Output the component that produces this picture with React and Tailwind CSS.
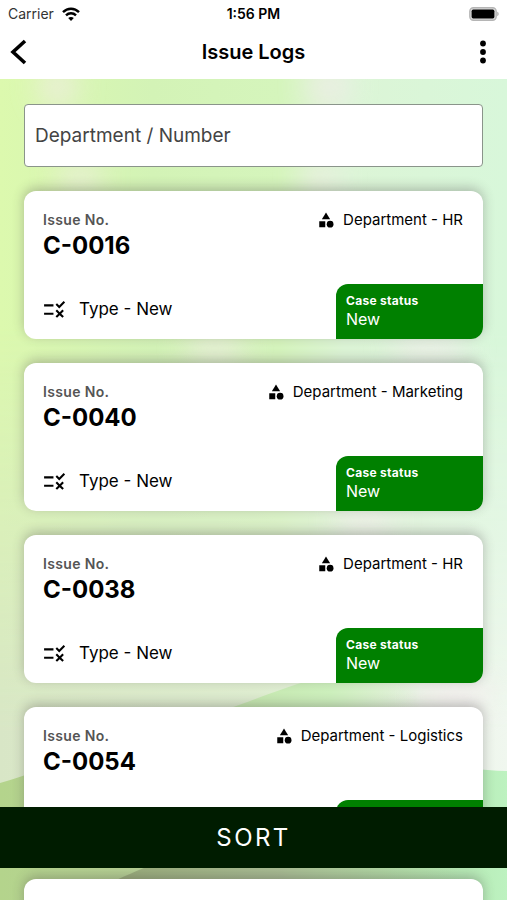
import { useState } from "react";
import { MdCategory, MdRule } from "react-icons/md";

const issues = [
    { number: "C-0016", department: "HR", type: "New", status: "New" },
    { number: "C-0040", department: "Marketing", type: "New", status: "New" },
    { number: "C-0038", department: "HR", type: "New", status: "New" },
    { number: "C-0054", department: "Logistics", type: "New", status: "New" },
    { number: "C-0061", department: "Finance", type: "New", status: "New" },
];

const StatusBar = () => (
    <div className="grid grid-cols-3 items-center h-7 px-2 text-sm">
        <div className="flex items-center gap-2 text-[#333]">
            <span>Carrier</span>
            <svg width="18" height="14" viewBox="0 0 18 14" fill="none" stroke="#000" strokeWidth="2.4">
                <path d="M1 5.2C5.5 .6 12.5 .6 17 5.2" />
                <path d="M4 8.4c2.800-2.800 7.200-2.800 10 0" />
                <path d="M9 14L6.200 11c1.600-1.500 4-1.500 5.600 0z" fill="#000" stroke="none" />
            </svg>
        </div>
        <span className="text-center font-semibold">1:56 PM</span>
        <svg className="justify-self-end" width="30" height="14" viewBox="0 0 30 14">
            <rect x=".8" y=".8" width="26.4" height="12.4" rx="3.6" fill="#ddd" stroke="#b5b5b5" strokeWidth="1.4" />
            <rect x="2.6" y="2.6" width="22.800" height="8.8" rx="1.6" fill="#000" />
            <path d="M28.2 4.8c2 .6 2 3.800 0 4.400z" fill="#b5b5b5" />
        </svg>
    </div>
);

const Header = () => (
    <div className="flex items-center justify-between h-12 px-2">
        <button type="button" aria-label="Back" className="w-8 h-12 flex items-center">
            <svg width="22" height="28" viewBox="0 0 22 28" fill="none" stroke="#000" strokeWidth="3.6">
                <path d="M17 3L5 14l12 11" />
            </svg>
        </button>
        <h1 className="text-xl font-semibold">Issue Logs</h1>
        <button type="button" aria-label="More options" className="w-8 h-12 flex items-center justify-center">
            <svg width="8" height="24" viewBox="0 0 8 24">
                <circle cx="4" cy="3.5" r="2.9" />
                <circle cx="4" cy="12" r="2.9" />
                <circle cx="4" cy="20.5" r="2.9" />
            </svg>
        </button>
    </div>
);

// Soft green wallpaper with hills at the bottom
const Backdrop = () => (
    <svg className="absolute inset-0 w-full h-full" viewBox="0 0 507 821" preserveAspectRatio="none" aria-hidden="true">
        <defs>
            <linearGradient id="sky" x1="0" y1="0" x2="1" y2="0">
                <stop offset="0" stopColor="#dcf9ae" />
                <stop offset=".3" stopColor="#d3f3b6" />
                <stop offset=".55" stopColor="#d5f5bc" />
                <stop offset=".68" stopColor="#dcf5d6" />
                <stop offset="1" stopColor="#d8f7da" />
            </linearGradient>
            <linearGradient id="haze" x1="0" y1="0" x2="1" y2="0">
                <stop offset="0" stopColor="#d8e6c6" />
                <stop offset=".5" stopColor="#dfecd2" />
                <stop offset="1" stopColor="#f0f7ef" />
            </linearGradient>
            <linearGradient id="fade" x1="0" y1="0" x2="0" y2="1">
                <stop offset=".3" stopColor="#fff" stopOpacity="0" />
                <stop offset=".8" stopColor="#fff" />
            </linearGradient>
            <mask id="low">
                <rect width="507" height="821" fill="url(#fade)" />
            </mask>
            <linearGradient id="meadow" x1="0" y1="0" x2="1" y2="0">
                <stop offset="0" stopColor="#c4e6ac" />
                <stop offset=".55" stopColor="#cdf0bd" />
                <stop offset="1" stopColor="#cdf0bd" stopOpacity="0" />
            </linearGradient>
            <linearGradient id="hill" x1="0" y1="0" x2="1" y2="0">
                <stop offset="0" stopColor="#b4d48c" />
                <stop offset=".3" stopColor="#b6d096" />
                <stop offset=".7" stopColor="#b2d9a4" />
                <stop offset=".9" stopColor="#b6e9b4" />
                <stop offset="1" stopColor="#bdf2c0" />
            </linearGradient>
            <linearGradient id="ridge" x1="0" y1="0" x2="1" y2="0">
                <stop offset="0" stopColor="#98ab78" />
                <stop offset=".5" stopColor="#a9bd94" />
                <stop offset="1" stopColor="#b2dba4" stopOpacity="0" />
            </linearGradient>
            <filter id="soft" x="-100%" y="-100%" width="300%" height="300%">
                <feGaussianBlur stdDeviation="14" />
            </filter>
        </defs>
        <rect width="507" height="821" fill="url(#sky)" />
        <rect width="507" height="821" fill="url(#haze)" mask="url(#low)" />
        <g filter="url(#soft)" fill="#f6eaf0" opacity=".6">
            <ellipse cx="58" cy="8" rx="20" ry="22" />
            <ellipse cx="328" cy="8" rx="22" ry="24" />
            <ellipse cx="320" cy="98" rx="20" ry="16" />
            <ellipse cx="80" cy="98" rx="24" ry="14" />
            <ellipse cx="215" cy="270" rx="32" ry="14" />
            <ellipse cx="430" cy="270" rx="40" ry="16" />
            <ellipse cx="365" cy="442" rx="30" ry="14" />
            <ellipse cx="455" cy="618" rx="40" ry="20" />
        </g>
        <path d="M220 632c30-8 60-24 110-36h90v50H220z" fill="url(#meadow)" />
        <path d="M0 704c60-18 140-48 240-50 100 0 180 36 267 38v129H0z" fill="url(#hill)" />
        <path d="M100 808c34-14 60-30 110-36h250v49H100z" fill="url(#ridge)" />
    </svg>
);

const IssueCard = ({ issue }) => (
    <li className="shrink-0 h-[148px] flex flex-col justify-between bg-white rounded-xl overflow-hidden shadow-[0_-3px_12px_rgba(60,50,60,0.3)]">
        <div className="flex items-start justify-between pt-[21px] pl-[19px] pr-5">
            <div>
                <p className="text-sm leading-4 font-semibold tracking-wide text-[#555]">Issue No.</p>
                <p className="text-2xl leading-9 font-bold">{issue.number}</p>
            </div>
            <p className="flex items-center gap-2 text-[15px] leading-4">
                <MdCategory size={18} className="-my-px" />
                Department - {issue.department}
            </p>
        </div>
        <div className="flex items-end justify-between pl-[18px]">
            <p className="flex items-center gap-3 pb-4 text-[17px] leading-7">
                <MdRule size={25} />
                Type - {issue.type}
            </p>
            <div className="w-[147px] h-[55px] pl-2.5 pt-2 rounded-tl-xl bg-[#008000] text-white">
                <p className="text-xs leading-[18px] font-bold tracking-wide">Case status</p>
                <p className="text-base leading-[18px]">{issue.status}</p>
            </div>
        </div>
    </li>
);

export default function App() {
    const [search, setSearch] = useState("");

    const visible = issues.filter((issue) =>
        (issue.department + " " + issue.number).toLowerCase().includes(search.toLowerCase())
    );

    return (
        <div className="relative h-screen flex flex-col overflow-hidden bg-white text-black font-[Inter,'Liberation_Sans',sans-serif]">
            <header className="shrink-0 pb-[3px]">
                <StatusBar />
                <Header />
            </header>

            <main className="relative flex-1 min-h-0">
                <Backdrop />
                <div className="relative h-full flex flex-col gap-6 px-6 pt-[25px] overflow-y-auto [scrollbar-width:none]">
                    <input
                        type="text"
                        aria-label="Department / Number"
                        placeholder="Department / Number"
                        value={search}
                        onChange={(e) => setSearch(e.target.value)}
                        className="shrink-0 w-full h-[63px] px-2.5 rounded border border-[#8a948a] bg-white text-[19px] placeholder:text-[#444]"
                    />
                    <ul className="flex flex-col gap-6">
                        {visible.map((issue) => (
                            <IssueCard key={issue.number} issue={issue} />
                        ))}
                    </ul>
                </div>
            </main>

            {/* Sort bar floats over the list */}
            <button
                type="button"
                className="absolute bottom-8 inset-x-0 h-[61px] bg-[#001c00] text-white text-2xl tracking-widest"
            >
                SORT
            </button>
        </div>
    );
}
